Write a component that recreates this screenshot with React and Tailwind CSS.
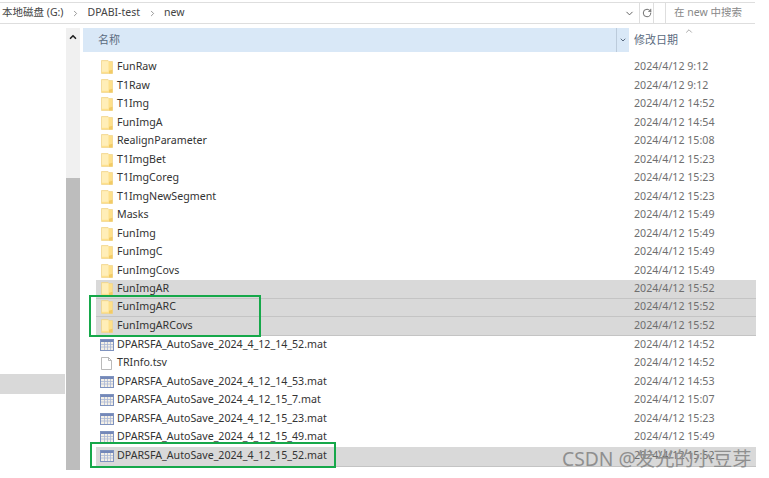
import { ChevronDown, ChevronRight, ChevronUp, RotateCw } from 'lucide-react'

const font = { fontFamily: '"Noto Sans", "Noto Sans CJK SC", sans-serif' }

const rows = [
  { name: 'FunRaw', date: '2024/4/12 9:12', type: 'folder' },
  { name: 'T1Raw', date: '2024/4/12 9:12', type: 'folder' },
  { name: 'T1Img', date: '2024/4/12 14:52', type: 'folder' },
  { name: 'FunImgA', date: '2024/4/12 14:54', type: 'folder' },
  { name: 'RealignParameter', date: '2024/4/12 15:08', type: 'folder' },
  { name: 'T1ImgBet', date: '2024/4/12 15:23', type: 'folder' },
  { name: 'T1ImgCoreg', date: '2024/4/12 15:23', type: 'folder' },
  { name: 'T1ImgNewSegment', date: '2024/4/12 15:23', type: 'folder' },
  { name: 'Masks', date: '2024/4/12 15:49', type: 'folder' },
  { name: 'FunImg', date: '2024/4/12 15:49', type: 'folder' },
  { name: 'FunImgC', date: '2024/4/12 15:49', type: 'folder' },
  { name: 'FunImgCovs', date: '2024/4/12 15:49', type: 'folder' },
  { name: 'FunImgAR', date: '2024/4/12 15:52', type: 'folder', selected: true },
  { name: 'FunImgARC', date: '2024/4/12 15:52', type: 'folder', selected: true },
  { name: 'FunImgARCovs', date: '2024/4/12 15:52', type: 'folder', selected: true },
  { name: 'DPARSFA_AutoSave_2024_4_12_14_52.mat', date: '2024/4/12 14:52', type: 'mat' },
  { name: 'TRInfo.tsv', date: '2024/4/12 14:52', type: 'file' },
  { name: 'DPARSFA_AutoSave_2024_4_12_14_53.mat', date: '2024/4/12 14:53', type: 'mat' },
  { name: 'DPARSFA_AutoSave_2024_4_12_15_7.mat', date: '2024/4/12 15:07', type: 'mat' },
  { name: 'DPARSFA_AutoSave_2024_4_12_15_23.mat', date: '2024/4/12 15:23', type: 'mat' },
  { name: 'DPARSFA_AutoSave_2024_4_12_15_49.mat', date: '2024/4/12 15:49', type: 'mat' },
  { name: 'DPARSFA_AutoSave_2024_4_12_15_52.mat', date: '2024/4/12 15:52', type: 'mat', selected: true, tall: true },
]

const FolderIcon = () => (
  <svg width="12" height="14" viewBox="0 0 12 14" className="shrink-0">
    <path d="M0.5 0.5h6.5l1 1h3.5v12h-11z" fill="#fee08a" stroke="#efd48c" strokeWidth="0.7" />
    <path d="M1 1.2h6.5v10.6h-6.5z" fill="#ffeeb8" />
    <path d="M8 10.8l3.5-1v3.7h-3.5z" fill="#f2cb66" />
  </svg>
)

const MatIcon = () => (
  <svg width="14" height="12" viewBox="0 0 14 12" className="shrink-0">
    <rect x="0.5" y="0.5" width="13" height="11" fill="#f3efe6" stroke="#7f93bf" />
    <rect x="1" y="1" width="12" height="2" fill="#7488b8" />
    <path d="M1 5.5h12M1 8h12M4.5 3v8M7.5 3v8M10.5 3v8" stroke="#a9b8d6" strokeWidth="0.8" />
  </svg>
)

const FileIcon = () => (
  <svg width="11" height="13" viewBox="0 0 11 13" className="shrink-0 ml-[1px] mr-[2px]">
    <path d="M0.5 0.5h7l3 3v9h-10z" fill="#fff" stroke="#a8a8a8" strokeWidth="0.8" />
    <path d="M7.5 0.5v3h3" fill="none" stroke="#a8a8a8" strokeWidth="0.8" />
  </svg>
)

const Row = ({ row }) => (
  <div
    className={`flex items-center ${row.tall ? 'h-[20px]' : 'h-[18.5px]'} ${
      row.selected ? 'bg-[#d9d9d9] border-b border-[#c4c4c4]' : ''
    }`}
  >
    <div className="w-[538px] flex items-center pl-[4px] gap-[3px] shrink-0">
      <div className="w-[14px] flex justify-center shrink-0">
        {row.type === 'folder' && <FolderIcon />}
        {row.type === 'mat' && <MatIcon />}
        {row.type === 'file' && <FileIcon />}
      </div>
      <span className="text-[10.65px] text-[#333] whitespace-nowrap">{row.name}</span>
    </div>
    <span className="text-[10.65px] text-[#6f6f6f] whitespace-nowrap">{row.date}</span>
  </div>
)

export default function App() {
  return (
    <div className="relative w-[769px] h-[478px] bg-white overflow-hidden" style={font}>
      {/* address bar */}
      <div className="h-[22px] mt-[2px] flex items-center border-y border-[#dedede] mr-[14px]">
        <div className="flex items-center flex-1 pl-[2px] text-[10.5px] text-[#444] min-w-0">
          <span>本地磁盘 (G:)</span>
          <ChevronRight className="w-[9px] h-[9px] mx-[7.5px] text-[#777]" />
          <span>DPABI-test</span>
          <ChevronRight className="w-[9px] h-[9px] mx-[7.5px] text-[#777]" />
          <span>new</span>
        </div>
        <ChevronDown className="w-[11px] h-[11px] text-[#555] mr-[4px]" />
        <div className="w-[15px] h-full border-x border-[#dedede] flex items-center justify-center">
          <RotateCw className="w-[10px] h-[10px] text-[#555]" />
        </div>
        <div className="w-[11px]" />
        <div className="w-[90px] h-full border-l border-[#dedede] pl-[8px] flex items-center text-[10.5px] text-[#888]">
          在 new 中搜索
        </div>
      </div>

      <div className="flex mt-[4px] h-[442px]">
        {/* nav pane */}
        <div className="w-[66px] shrink-0 pt-[346px]">
          <div className="w-[65px] h-[20px] bg-[#d9d9d9]" />
        </div>
        {/* scrollbar */}
        <div className="w-[14px] shrink-0 bg-[#f0f0f0] flex flex-col">
          <div className="h-[18px] flex items-center justify-center">
            <ChevronUp className="w-[10px] h-[10px] text-[#222]" strokeWidth={4} />
          </div>
          <div className="h-[132px]" />
          <div className="flex-1 bg-[#bdbdbd]" />
        </div>
        {/* list */}
        <div className="w-[673px] ml-[3px] shrink-0">
          <div className="h-[24px] flex items-center relative">
            <div className="w-[546px] h-full bg-[#d9e8f7] flex items-center justify-between pl-[15px]">
              <span className="text-[11px] text-[#5a6b80]">名称</span>
              <div className="w-[13px] h-full border-l border-[#bccbdb] flex items-center justify-center">
                <ChevronDown className="w-[8px] h-[8px] text-[#5a6b80]" strokeWidth={3} />
              </div>
            </div>
            <span className="ml-[5px] text-[11px] text-[#5a6b80]">修改日期</span>
            <ChevronUp className="absolute left-[601px] -top-[2px] w-[10px] h-[10px] text-[#999]" />
          </div>
          <div className="mt-[6px] ml-[13px]">
            {rows.map((r) => (
              <Row key={r.name} row={r} />
            ))}
          </div>
        </div>
      </div>

      {/* green annotations */}
      <div className="absolute left-[89px] top-[295px] w-[172px] h-[42px] border-[2px] border-[#16a84a]" />
      <div className="absolute left-[90px] top-[442px] w-[246px] h-[26px] border-[2px] border-[#16a84a]" />

      {/* watermark */}
      <div className="absolute left-[562px] top-[446px] text-[19.3px] leading-[26px] text-[#8f8f8f] whitespace-nowrap">
        CSDN @发光的小豆芽
      </div>
    </div>
  )
}
